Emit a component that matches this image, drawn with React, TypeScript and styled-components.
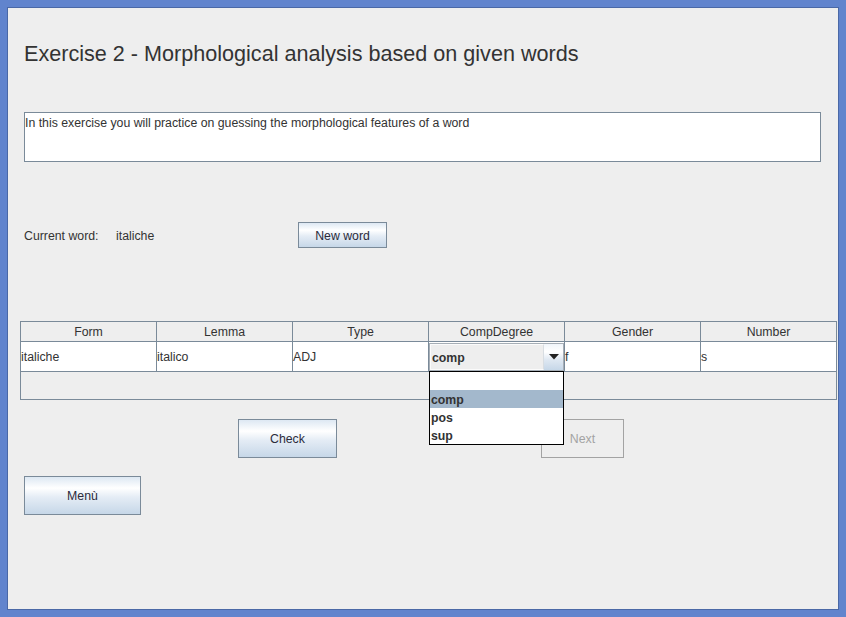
import React from "react";
import styled, { createGlobalStyle } from "styled-components";

const GlobalStyle = createGlobalStyle`
  html, body { margin: 0; padding: 0; }
  body {
    background: #6184cd;
    font-family: "Liberation Sans", Arial, sans-serif;
    font-size: 12.3px;
    color: #333333;
  }
  * { box-sizing: border-box; }
`;

const Frame = styled.div`
  width: 846px;
  height: 617px;
  padding: 7px;
  background: #6184cd;
`;

const Panel = styled.div`
  height: 100%;
  background: #eeeeee;
  border: 1px solid #4a68a6;
  display: flex;
  flex-direction: column;
`;

const Title = styled.h1`
  margin: 33px 0 0 16px;
  font-size: 21.6px;
  font-weight: normal;
  line-height: 26px;
  height: 26px;
  color: #333333;
  white-space: nowrap;
`;

const Intro = styled.div`
  margin: 45px 0 0 16px;
  width: 797px;
  height: 50px;
  background: #ffffff;
  border: 1px solid #7a8a99;
  padding: 3px 0;
  font-size: 12.3px;
  line-height: 14px;
  color: #333333;
`;

const WordRow = styled.div`
  margin: 60px 0 0 16px;
  height: 26px;
  display: flex;
  align-items: center;
`;

const Label = styled.span<{ $w: number }>`
  width: ${(p) => p.$w}px;
  padding-top: 2px;
  font-size: 12.3px;
  color: #333333;
  white-space: nowrap;
`;

const Button = styled.button<{ $w: number; $h: number; $pt?: number }>`
  width: ${(p) => p.$w}px;
  height: ${(p) => p.$h}px;
  padding: ${(p) => p.$pt ?? 0}px 0 0 0;
  border: 1px solid #7a8a99;
  background: linear-gradient(
    to bottom,
    #dde8f3 0%,
    #ffffff 30%,
    #e4ecf5 55%,
    #c6d7e8 100%
  );
  font-family: "Liberation Sans", Arial, sans-serif;
  font-size: 12.3px;
  color: #2b2b3b;
  text-align: center;
  cursor: pointer;
  &:disabled {
    background: #eeeeee;
    border-color: #a3a3a3;
    color: #a3a3a3;
    cursor: default;
  }
`;

const TableBox = styled.div`
  margin: 73px 0 0 12px;
  width: 817px;
  height: 79px;
  border: 1px solid #7a8a99;
  background: #eeeeee;
  position: relative;
`;

const Row = styled.div<{ $h: number; $bg: string }>`
  display: grid;
  grid-template-columns: repeat(6, 135px);
  column-gap: 1px;
  background: #7a8a99;
  height: ${(p) => p.$h + 1}px;
  border-bottom: 1px solid #7a8a99;
  & > div {
    background: ${(p) => p.$bg};
  }
`;

const HeadCell = styled.div`
  height: 19px;
  line-height: 21px;
  text-align: center;
  font-size: 12.3px;
  color: #333333;
`;

const Cell = styled.div`
  height: 29px;
  line-height: 31px;
  padding-left: 0;
  font-size: 12.3px;
  color: #333333;
  position: relative;
`;

const Combo = styled.div`
  position: absolute;
  left: 0;
  top: 1px;
  width: 135px;
  height: 28px;
  border: 1px solid #a6aeb6;
  display: flex;
  background: #eeeeee;
`;

const ComboText = styled.div`
  flex: 1;
  border: 1px solid #fbfbfb;
  border-right-color: #d8dde2;
  line-height: 26px;
  padding-left: 1px;
  font-weight: bold;
  font-size: 12.3px;
  color: #333333;
`;

const ComboArrow = styled.div`
  width: 19px;
  display: flex;
  align-items: center;
  justify-content: center;
  background: linear-gradient(to bottom, #f0f5fa 0%, #ffffff 30%, #dfe8f2 60%, #c6d7e8 100%);
`;

const Popup = styled.div`
  position: absolute;
  left: 408px;
  top: 49px;
  width: 135px;
  height: 74px;
  border: 1px solid #000000;
  background: #ffffff;
  z-index: 2;
`;

const PopItem = styled.div<{ $sel?: boolean }>`
  height: 18px;
  line-height: 20px;
  padding-left: 1px;
  font-weight: bold;
  font-size: 12.3px;
  color: #333333;
  background: ${(p) => (p.$sel ? "#a3b8cc" : "#ffffff")};
`;

const ActionRow = styled.div`
  margin: 19px 0 0 230px;
  display: flex;
  gap: 204px;
`;

const MenuRow = styled.div`
  margin: 18px 0 0 16px;
`;

const columns = ["Form", "Lemma", "Type", "CompDegree", "Gender", "Number"];

export default function App() {
  return (
    <>
      <GlobalStyle />
      <Frame>
        <Panel>
          <Title>Exercise 2 - Morphological analysis based on given words</Title>
          <Intro>In this exercise you will practice on guessing the morphological features of a word</Intro>
          <WordRow>
            <Label $w={92}>Current word:</Label>
            <Label $w={182}>italiche</Label>
            <Button $w={89} $h={26} $pt={2}>New word</Button>
          </WordRow>
          <TableBox>
            <Row $h={19} $bg="#eeeeee">
              {columns.map((c) => (
                <HeadCell key={c}>{c}</HeadCell>
              ))}
            </Row>
            <Row $h={29} $bg="#ffffff">
              <Cell>italiche</Cell>
              <Cell>italico</Cell>
              <Cell>ADJ</Cell>
              <Cell>
                <Combo>
                  <ComboText>comp</ComboText>
                  <ComboArrow>
                    <svg width="10" height="6" viewBox="0 0 10 6">
                      <path d="M0 0 H10 L5 5.5 Z" fill="#222" />
                    </svg>
                  </ComboArrow>
                </Combo>
              </Cell>
              <Cell>f</Cell>
              <Cell>s</Cell>
            </Row>
            <Popup>
              <PopItem />
              <PopItem $sel>comp</PopItem>
              <PopItem>pos</PopItem>
              <PopItem>sup</PopItem>
            </Popup>
          </TableBox>
          <ActionRow>
            <Button $w={99} $h={39}>Check</Button>
            <Button $w={83} $h={39} disabled>Next</Button>
          </ActionRow>
          <MenuRow>
            <Button $w={117} $h={39}>Menù</Button>
          </MenuRow>
        </Panel>
      </Frame>
    </>
  );
}
